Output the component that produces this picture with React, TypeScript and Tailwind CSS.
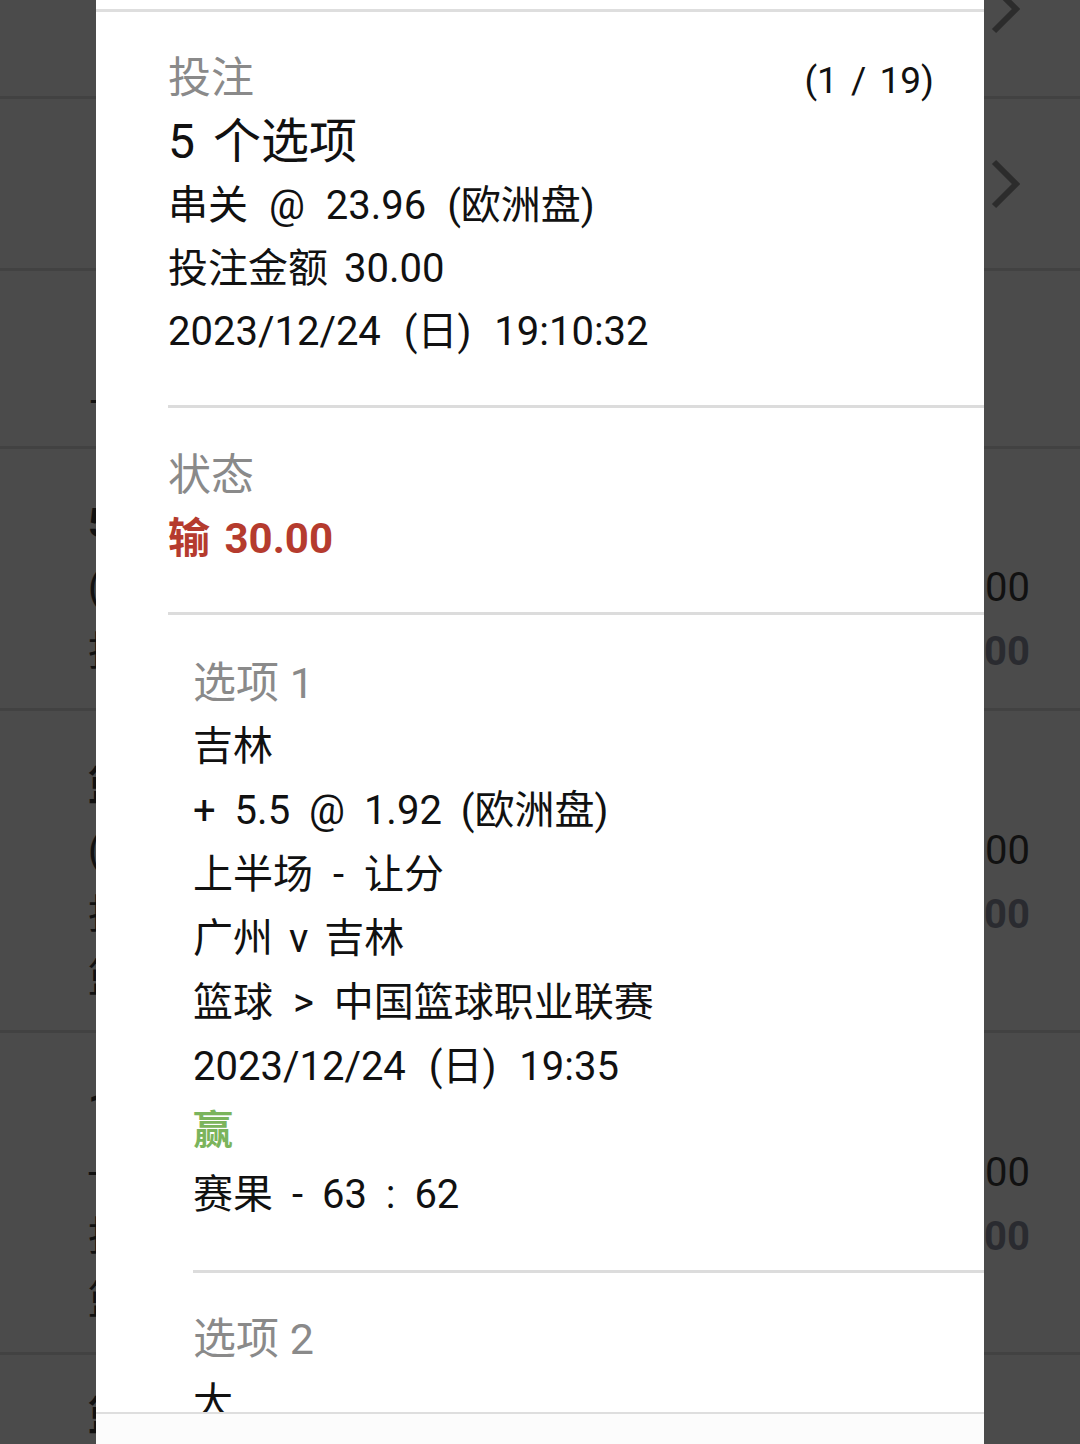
import React from "react";

const Chevron = () => (
  <svg width="30" height="50" viewBox="0 0 30 50" fill="none">
    <path d="M4 3 L26 25 L4 47" stroke="#2c2c2c" strokeWidth="6" strokeLinejoin="miter" />
  </svg>
);

function BgLine({ left, right, bold, leftClass = "" }: { left?: string; right?: string; bold?: boolean; leftClass?: string }) {
  return (
    <div className="h-[64px] leading-[64px] flex justify-between whitespace-nowrap text-[40px]">
      <span className={"pl-[88px] text-[#111] " + leftClass}>{left ?? ""}</span>
      <span className={"pr-[50px] " + (bold ? "font-bold text-[#2a2b30]" : "text-[#111]")}>{right ?? ""}</span>
    </div>
  );
}

function Row({ children, className = "" }: { children: React.ReactNode; className?: string }) {
  return <div className={"h-[64px] leading-[64px] whitespace-nowrap " + className}>{children}</div>;
}

export default function App() {
  return (
    <div className="relative w-[1080px] h-[1444px] overflow-hidden bg-[#4b4b4b] font-['Roboto','Noto_Sans_CJK_SC',sans-serif]">
      {/* background list (dimmed) */}
      <div className="flex flex-col -mt-[79px]">
        <div className="h-[178px] border-b-[3px] border-[#424242] flex items-center justify-end pr-[60px]">
          <Chevron />
        </div>
        <div className="h-[172px] border-b-[3px] border-[#424242] flex items-center justify-end pr-[60px]">
          <Chevron />
        </div>
        <div className="h-[178px] border-b-[3px] border-[#424242] pt-[100px]">
          <BgLine left="——" />
        </div>
        <div className="h-[262px] border-b-[3px] border-[#424242] pt-[43px]">
          <BgLine left="5" leftClass="font-bold" />
          <BgLine left="(" right="30.00" />
          <BgLine left="投" right="30.00" bold />
        </div>
        <div className="h-[322px] border-b-[3px] border-[#424242] pt-[44px]">
          <BgLine left="篮" leftClass="font-bold" />
          <BgLine left="(" right="30.00" />
          <BgLine left="投" right="30.00" bold />
          <BgLine left="篮" />
        </div>
        <div className="h-[322px] border-b-[3px] border-[#424242] pt-[44px]">
          <BgLine left="1" leftClass="font-bold" />
          <BgLine left="-" right="30.00" />
          <BgLine left="投" right="30.00" bold />
          <BgLine left="篮" />
        </div>
        <div className="h-[200px] pt-[30px]">
          <BgLine left="篮" leftClass="font-bold" />
        </div>
      </div>

      {/* dialog */}
      <div className="absolute left-[96px] top-0 w-[888px] h-[1444px] bg-white flex flex-col">
        <div className="h-[9px] shrink-0" />
        <div className="h-[3px] bg-[#dedede] shrink-0" />
        <div className="flex-1 overflow-hidden">
          {/* header */}
          <div className="pl-[72px]">
            <div className="pt-[34px] pb-[42px]">
              <div className="h-[64px] leading-[64px] flex justify-between items-center pr-[50px] whitespace-nowrap">
                <span className="text-[43px] text-[#8a8a8a]">投注</span>
                <span className="text-[37px] text-[#111] pt-[6px] [word-spacing:4px]">(1 / 19)</span>
              </div>
              <Row className="text-[48px] font-normal text-[#111] [word-spacing:6px]">5 个选项</Row>
              <div className="h-[63px] leading-[63px] text-[40px] text-[#111] whitespace-nowrap [word-spacing:11px]">串关 @ 23.96 (欧洲盘)</div>
              <div className="h-[63px] leading-[63px] text-[40px] text-[#111] whitespace-nowrap [word-spacing:6px]">投注金额 30.00</div>
              <div className="h-[63px] leading-[63px] text-[40px] text-[#111] whitespace-nowrap [word-spacing:13px]">2023/12/24 (日) 19:10:32</div>
            </div>
            <div className="h-[3px] bg-[#dcdcdc]" />
          </div>

          {/* status */}
          <div className="pl-[72px]">
            <div className="pt-[35px] pb-[41px]">
              <Row className="text-[43px] text-[#8a8a8a]">状态</Row>
              <Row className="text-[42px] font-bold text-[#b53b2e] [word-spacing:4px]">输 30.00</Row>
            </div>
            <div className="h-[3px] bg-[#dcdcdc]" />
          </div>

          {/* selection 1 */}
          <div className="pl-[97px]">
            <div className="pt-[36px] pb-[43px]">
              <Row className="text-[43px] text-[#8a8a8a]">选项 1</Row>
              <Row className="text-[40px] text-[#111]">吉林</Row>
              <Row className="text-[40px] text-[#111] [word-spacing:9px]">+ 5.5 @ 1.92 (欧洲盘)</Row>
              <Row className="text-[40px] text-[#111] [word-spacing:10px]">上半场 - 让分</Row>
              <Row className="text-[40px] text-[#111] [word-spacing:6px]">广州 v 吉林</Row>
              <Row className="text-[40px] text-[#111] [word-spacing:10px]">篮球 &gt; 中国篮球职业联赛</Row>
              <Row className="text-[40px] text-[#111] [word-spacing:13px]">2023/12/24 (日) 19:35</Row>
              <Row className="text-[40px] font-bold text-[#7bb45c]">赢</Row>
              <Row className="text-[40px] text-[#111] [word-spacing:9px]">赛果 - 63 : 62</Row>
            </div>
            <div className="h-[3px] bg-[#dcdcdc]" />
          </div>

          {/* selection 2 */}
          <div className="pl-[97px]">
            <div className="pt-[34px]">
              <Row className="text-[43px] text-[#8a8a8a]">选项 2</Row>
              <Row className="text-[40px] text-[#111]">大</Row>
            </div>
          </div>
        </div>
        <div className="h-[2px] bg-[#dedede] shrink-0" />
        <div className="h-[30px] bg-[#fcfcfc] shrink-0" />
      </div>
    </div>
  );
}
